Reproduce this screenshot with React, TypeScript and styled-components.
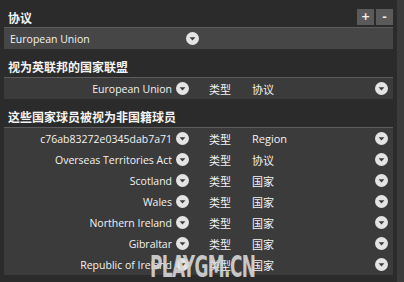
import styled, { createGlobalStyle } from 'styled-components'

const GlobalStyle = createGlobalStyle`
  html, body {
    margin: 0;
    padding: 0;
    background: #2b2b2b;
  }
  body {
    font-family: 'Open Sans', 'Noto Sans CJK SC', sans-serif;
    color: #f2f2f2;
  }
`

interface Entry {
  name: string
  type: string
}

const excluded: Entry[] = [
  { name: 'c76ab83272e0345dab7a71', type: 'Region' },
  { name: 'Overseas Territories Act', type: '协议' },
  { name: 'Scotland', type: '国家' },
  { name: 'Wales', type: '国家' },
  { name: 'Northern Ireland', type: '国家' },
  { name: 'Gibraltar', type: '国家' },
  { name: 'Republic of Ireland', type: '国家' }
]

function DropIcon() {
  return (
    <Drop viewBox='0 0 13 13'>
      <circle cx='6.5' cy='6.5' r='6.5' fill='#e4e4e4' />
      <path d='M3.6 5.2h5.8L6.5 8.4z' fill='#3c3c3c' />
    </Drop>
  )
}

function EntryRow({ name, type }: Entry) {
  return (
    <Row>
      <Name>{name}</Name>
      <DropIcon />
      <TypeLabel>类型</TypeLabel>
      <Value>{type}</Value>
      <DropIcon />
    </Row>
  )
}

export default function App() {
  return (
    <Page>
      <GlobalStyle />
      <Content>
        <Header>
          <Title>协议</Title>
          <Buttons>
            <SmallBtn>+</SmallBtn>
            <SmallBtn>-</SmallBtn>
          </Buttons>
        </Header>
        <SelectPanel>
          <Select>
            <span>European Union</span>
            <DropIcon />
          </Select>
        </SelectPanel>

        <Header>
          <Title>视为英联邦的国家联盟</Title>
        </Header>
        <Panel>
          <EntryRow name='European Union' type='协议' />
        </Panel>

        <Header>
          <Title>这些国家球员被视为非国籍球员</Title>
        </Header>
        <Panel>
          {excluded.map((e) => (
            <EntryRow key={e.name} {...e} />
          ))}
        </Panel>
      </Content>
      <Scrollbar />
      <Watermark>PLAYGM.CN</Watermark>
    </Page>
  )
}

const Page = styled.div`
  position: relative;
  display: flex;
  width: 404px;
  height: 282px;
  overflow: hidden;
  background: #2b2b2b;
`

const Content = styled.div`
  width: 389px;
  padding: 0 4px;
`

const Scrollbar = styled.div`
  width: 7px;
  background: #3b3b3b;
`

const Header = styled.div`
  height: 28px;
  padding: 8px 0 0 4px;
  box-sizing: border-box;
  display: flex;
  align-items: center;
  justify-content: space-between;
  &:first-child {
    height: 27px;
  }
`

const Title = styled.div`
  font-size: 12px;
  font-weight: bold;
  color: #f4f4f4;
`

const Buttons = styled.div`
  display: flex;
  gap: 2px;
  align-self: flex-start;
  margin-top: 1px;
`

const SmallBtn = styled.div`
  width: 17px;
  height: 16px;
  background: #5a5a5a;
  color: #f0f0f0;
  font-size: 11px;
  font-weight: bold;
  line-height: 16px;
  text-align: center;
  font-family: 'DejaVu Sans', sans-serif;
`

const Panel = styled.div`
  background: #3b3b3b;
  border-top: 1px solid #5c5c5c;
`

const SelectPanel = styled(Panel)`
  background: #464646;
  height: 21px;
  display: flex;
  align-items: center;
`

const Select = styled.div`
  width: 195px;
  padding-left: 6px;
  box-sizing: border-box;
  display: flex;
  align-items: center;
  justify-content: space-between;
  font-size: 10.5px;
`

const Row = styled.div`
  height: 21px;
  display: grid;
  grid-template-columns: 168px 13px 55px 1fr 13px;
  column-gap: 4px;
  padding-right: 5px;
  align-items: center;
  font-size: 10.5px;
`

const Name = styled.div`
  text-align: right;
  white-space: nowrap;
  overflow: hidden;
`

const TypeLabel = styled.div`
  padding-left: 16px;
  font-size: 11px;
`

const Value = styled.div`
  white-space: nowrap;
  font-size: 11px;
`

const Drop = styled.svg`
  width: 13px;
  height: 13px;
  display: block;
`

const Watermark = styled.div`
  position: absolute;
  left: 150px;
  top: 249px;
  font-family: 'DejaVu Sans Condensed', 'DejaVu Sans', sans-serif;
  font-weight: bold;
  font-size: 30px;
  letter-spacing: -1px;
  color: rgba(214, 214, 214, 0.92);
  transform: scaleX(0.63);
  transform-origin: left top;
  pointer-events: none;
`
